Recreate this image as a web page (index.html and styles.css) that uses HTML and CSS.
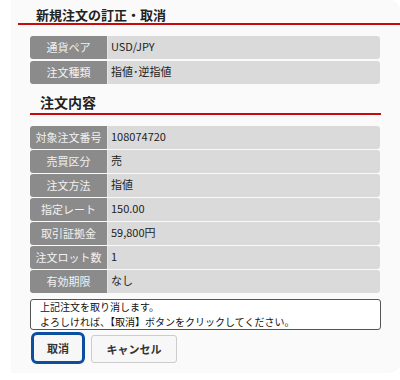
FILE: index.html
```html
<!DOCTYPE html>
<html lang="ja">

<head>
    <meta charset="UTF-8">
    <title>新規注文の訂正・取消</title>
    <link rel="stylesheet" href="styles.css">
</head>

<body>
    <div class="panel">
        <h2 class="title">新規注文の訂正・取消</h2>

        <div class="info-table first">
            <div class="row"><span class="label">通貨ペア</span><span class="value">USD/JPY</span></div>
            <div class="row"><span class="label">注文種類</span><span class="value">指値･逆指値</span></div>
        </div>

        <h3 class="sub-title">注文内容</h3>

        <div class="info-table">
            <div class="row"><span class="label">対象注文番号</span><span class="value">108074720</span></div>
            <div class="row"><span class="label">売買区分</span><span class="value">売</span></div>
            <div class="row"><span class="label">注文方法</span><span class="value">指値</span></div>
            <div class="row"><span class="label">指定レート</span><span class="value">150.00</span></div>
            <div class="row"><span class="label">取引証拠金</span><span class="value">59,800円</span></div>
            <div class="row"><span class="label">注文ロット数</span><span class="value">1</span></div>
            <div class="row"><span class="label">有効期限</span><span class="value">なし</span></div>
        </div>

        <div class="message">
            上記注文を取り消します。<br>
            よろしければ、【取消】ボタンをクリックしてください。
        </div>

        <div class="buttons">
            <button class="btn btn-primary">取消</button>
            <button class="btn">キャンセル</button>
        </div>
    </div>
</body>

</html>
```

FILE: styles.css
```css
* {
    margin: 0;
    padding: 0;
    box-sizing: border-box;
}

body {
    font-family: "Noto Sans CJK JP", "Noto Sans", sans-serif;
    background: #fff;
    color: #222;
    width: 400px;
    height: 380px;
    overflow: hidden;
}

.panel {
    margin-left: 11px;
    width: 389px;
    height: 373px;
    background: #fafafa;
    border-radius: 0 10px 10px 0;
}

/* Headings */
.title {
    margin-left: 7px;
    padding-left: 18px;
    height: 25px;
    line-height: 29px;
    font-size: 13px;
    font-weight: bold;
    color: #222;
    border-bottom: 2px solid #c80a0a;
}

.sub-title {
    margin: 9px 0 0 19px;
    width: 351px;
    padding-left: 10px;
    height: 22px;
    line-height: 18px;
    font-size: 14px;
    font-weight: bold;
    color: #222;
    border-bottom: 2px solid #c80a0a;
}

/* Tables */
.info-table {
    margin: 11px 0 0 19px;
    width: 350px;
}

.info-table.first {
    margin-top: 11px;
}

.row {
    display: flex;
    height: 23px;
    margin-bottom: 1px;
    font-size: 11px;
}

.info-table.first .row {
    margin-bottom: 2px;
}

.label {
    width: 77px;
    background: #8b8b8b;
    color: #f2f2f2;
    text-align: center;
    line-height: 23px;
    border-radius: 3px 0 0 3px;
}

.value {
    flex: 1;
    background: #dadada;
    padding-left: 3px;
    line-height: 21px;
    border-left: 1px solid #e6e6e6;
    border-radius: 0 3px 3px 0;
}

/* Message */
.message {
    margin: 6px 0 0 19px;
    width: 351px;
    height: 31px;
    padding: 0 9px;
    background: #fff;
    border: 1px solid #555;
    border-radius: 3px;
    font-size: 10px;
    line-height: 14.5px;
    color: #111;
}

/* Buttons */
.buttons {
    display: flex;
    align-items: center;
    gap: 6px;
    margin: 2px 0 0 20px;
}

.btn {
    height: 28px;
    width: 86px;
    background: #f7f7f7;
    border: 1px solid #ccc;
    border-radius: 3px;
    font-family: inherit;
    font-size: 11px;
    font-weight: bold;
    color: #333;
    margin-top: 2px;
}

.btn-primary {
    width: 54px;
    height: 32px;
    border: 3px solid #0b4f9e;
    border-radius: 6px;
    margin-top: 0;
}
```
